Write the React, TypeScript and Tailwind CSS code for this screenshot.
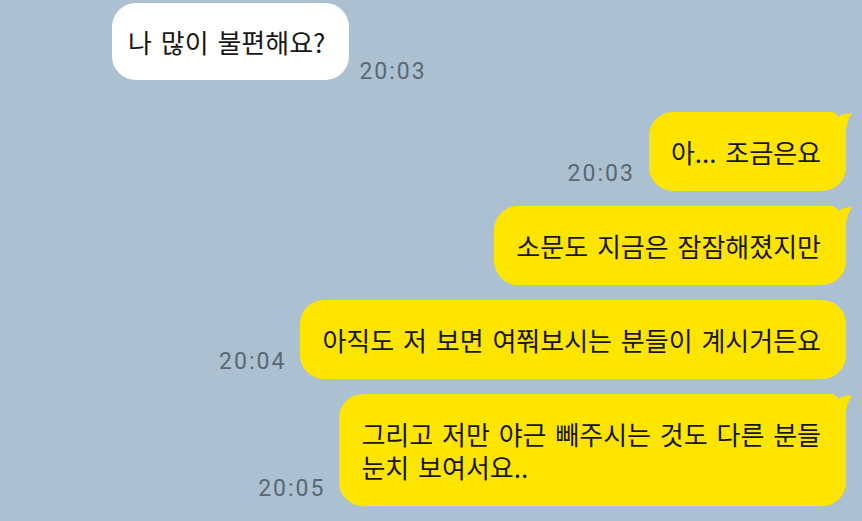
import type { ReactNode } from 'react';

type Msg = {
  id: number;
  mine: boolean;
  text: string;
  time?: string;
  tail?: boolean;
};

const messages: Msg[] = [
  { id: 1, mine: false, text: '나 많이 불편해요?', time: '20:03' },
  { id: 2, mine: true, text: '아... 조금은요', time: '20:03', tail: true },
  { id: 3, mine: true, text: '소문도 지금은 잠잠해졌지만', tail: true },
  { id: 4, mine: true, text: '아직도 저 보면 여쭤보시는 분들이 계시거든요', time: '20:04' },
  {
    id: 5,
    mine: true,
    text: '그리고 저만 야근 빼주시는 것도 다른 분들\n눈치 보여서요..',
    time: '20:05',
    tail: true,
  },
];

const Tail = () => (
  <svg
    className="absolute -right-[6px] top-0 h-[32px] w-[32px]"
    viewBox="0 0 32 32"
    aria-hidden
  >
    <path d="M0 0 H12 Q15.5 0 18 5 Q22 1.5 32 1.2 Q27 8 26 18 V32 H0 Z" fill="#fee500" />
  </svg>
);

const Time = ({ children, mine }: { children: ReactNode; mine: boolean }) => (
  <span
    className={
      mine
        ? 'mb-[4px] mr-[14px] font-["Roboto",sans-serif] text-[23px] leading-[26px] tracking-[2px] text-[#5b6873]'
        : 'mb-[-5px] ml-[10px] font-["Roboto",sans-serif] text-[23px] leading-[26px] tracking-[2px] text-[#5b6873]'
    }
  >
    {children}
  </span>
);

export default function App() {
  return (
    <div className="flex h-[521px] w-full flex-col overflow-hidden bg-[#abc1d1] pt-[3px] font-['Noto_Sans_CJK_KR','Noto_Sans',sans-serif]">
      {messages.map((m, i) => {
        const prev = messages[i - 1];
        const gap = !prev ? '' : prev.mine !== m.mine ? 'mt-[32px]' : 'mt-[15px]';
        return (
          <div
            key={m.id}
            className={m.mine ? `flex items-end justify-end pr-[16px] ${gap}` : `flex items-end pl-[112px] ${gap}`}
          >
            {m.mine && m.time ? <Time mine>{m.time}</Time> : null}
            <div
              className={
                m.mine
                  ? 'relative rounded-[24px] bg-[#fee500] py-[23px] pl-[22px] pr-[25px]'
                  : 'relative rounded-[24px] bg-white py-[22px] pl-[16px] pr-[24px]'
              }
            >
              <p className="whitespace-pre-line text-[26px] leading-[33px] text-[#161616] [word-spacing:3px]">
                {m.text}
              </p>
              {m.tail ? <Tail /> : null}
            </div>
            {!m.mine && m.time ? <Time mine={false}>{m.time}</Time> : null}
          </div>
        );
      })}
    </div>
  );
}
